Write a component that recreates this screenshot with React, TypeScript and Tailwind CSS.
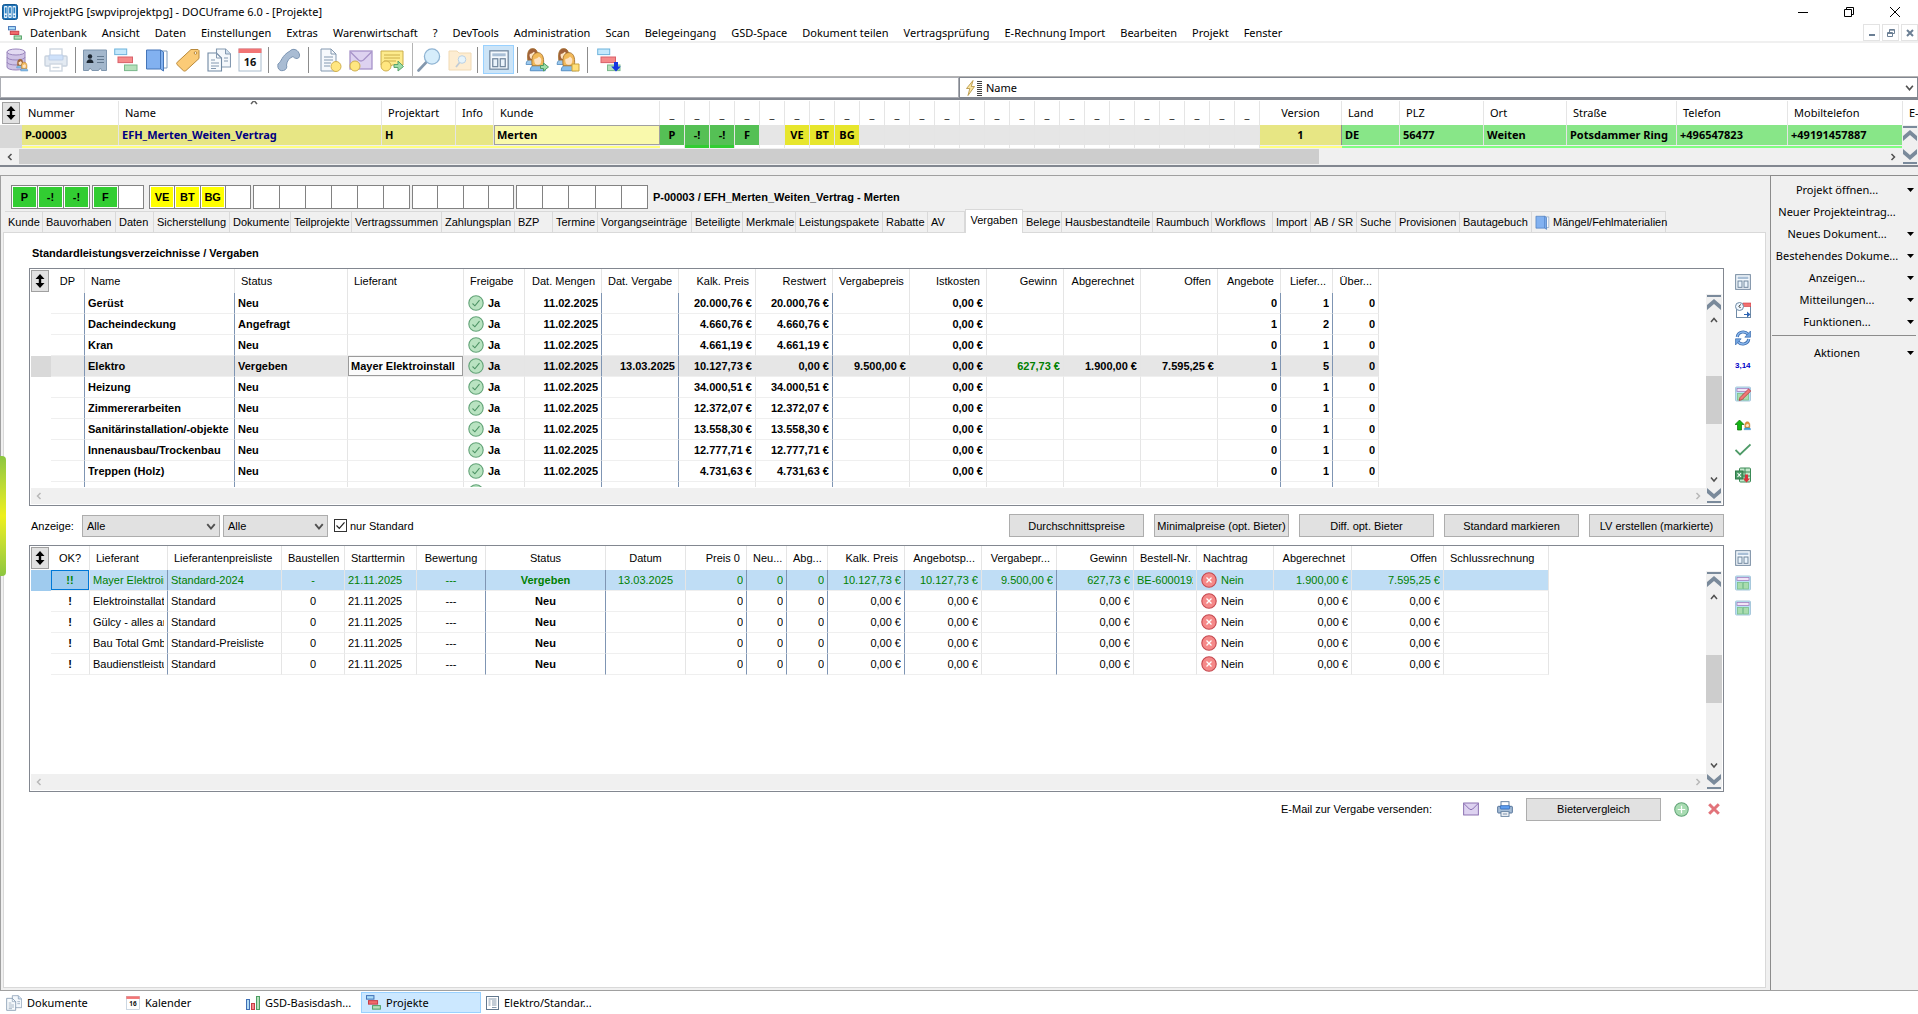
import { useState } from 'react';
import type { ReactNode } from 'react';
import { clsx } from 'clsx';

const ui = 'font-["Noto_Sans","Open_Sans",sans-serif]';
const form = 'font-["Liberation_Sans",Arial,sans-serif]';

interface IconProps {
  className?: string;
}

interface Column {
  title: string;
  width: string;
  align?: 'left' | 'center' | 'right';
  dark?: boolean;
}

const alignClass = {
  left: 'text-left',
  center: 'text-center',
  right: 'text-right',
};

/* ---------- Icons ---------- */

function AppIcon({ className = 'w-4 h-4' }: IconProps) {
  return (
    <svg className={className} viewBox="0 0 16 16">
      <rect x="0.5" y="0.5" width="15" height="15" rx="2" fill="#1e73b8" stroke="#155a94" />
      {[2, 6.3, 10.6].map((x) => (
        <g key={x}>
          <rect x={x} y="2" width="3.4" height="12" rx="0.8" fill="#e8f3fb" />
          <rect x={x + 0.8} y="3.4" width="1.8" height="6" fill="#2d83c4" />
          <circle cx={x + 1.7} cy="11.8" r="0.9" fill="#2d83c4" />
        </g>
      ))}
    </svg>
  );
}

function ProjectIcon({ className = 'w-4 h-4', pale, arrow }: IconProps & { pale?: boolean; arrow?: boolean }) {
  return (
    <svg className={className} viewBox="0 0 24 24">
      <rect x="0.7" y="1" width="12" height="5.6" fill={pale ? '#c4e8fc' : '#a9dcf8'} stroke={pale ? '#6fb3dc' : '#3f6fb5'} strokeWidth={pale ? 1 : 1.6} />
      <rect x="4" y="9" width="14.5" height="5.6" fill={pale ? '#f58a8a' : '#f06a6a'} stroke={pale ? '#d9606a' : '#c83c46'} strokeWidth={pale ? 1 : 1.6} />
      <rect x="10.500" y="17" width="12.500" height="5.600" fill="#b5e0bb" stroke={pale ? '#79b98b' : '#4c9e63'} strokeWidth={pale ? 1 : 1.6} />
      {arrow && <path d="M17 14h4v4.500h2.800L19 23.500l-4.800-5H17z" fill="#1436e0" />}
    </svg>
  );
}

function Person({ x, y, s, hair, body }: { x: number; y: number; s: number; hair: string; body: string }) {
  return (
    <g transform={`translate(${x} ${y}) scale(${s})`}>
      <path d="M1 15c0-4 3-5 6-5s6 1 6 5z" fill={body} stroke="#4a86bd" strokeWidth="0.7" />
      <path d="M2.500 11C1.500 3 4 0.500 7 0.500S12.500 3 11.500 11z" fill={hair} stroke="#a5702c" strokeWidth="0.7" />
      <ellipse cx="7" cy="6.600" rx="2.800" ry="3.600" fill="#fde3c4" />
      <path d="M4 5.500c2 0 3-1 4-2 1 1 1.500 1.500 2.200 2C10 2.500 9 2 7 2S4 3 4 5.500z" fill={hair} />
    </g>
  );
}

function DatabaseIcon({ className = 'w-6 h-6' }: IconProps) {
  return (
    <svg className={className} viewBox="0 0 24 24">
      <path d="M2 4v15c0 4 18 4 18 0V4z" fill="#cfc3e6" stroke="#9a86bd" />
      <ellipse cx="11" cy="4" rx="9" ry="3" fill="#e2daf2" stroke="#9a86bd" />
      <path d="M2 9c0 4 18 4 18 0M2 14c0 4 18 4 18 0" fill="none" stroke="#9a86bd" />
      <Person x={11} y={11} s={0.6} hair="#a0613a" body="#86bdea" />
      <Person x={15} y={14} s={0.6} hair="#f2b95a" body="#86bdea" />
    </svg>
  );
}

function PrinterIcon({ className = 'w-6 h-6', faded }: IconProps & { faded?: boolean }) {
  return (
    <svg className={clsx(className, faded && 'opacity-30')} viewBox="0 0 24 24">
      <rect x="6" y="1" width="12" height="8" fill="#fff" stroke="#5f7c9c" strokeWidth="1.4" />
      <rect x="1" y="8" width="22" height="10" rx="1" fill="#a6bdd6" stroke="#4c6d94" strokeWidth="1.4" />
      <rect x="5" y="7" width="14" height="5" rx="1" fill="#5f9ff0" stroke="#2f66b5" strokeWidth="1.2" />
      <rect x="6" y="16" width="12" height="7" fill="#fff" stroke="#5f7c9c" strokeWidth="1.4" />
      <path d="M8.500 19.500h7" stroke="#5f7c9c" strokeWidth="1.400" />
    </svg>
  );
}

function ContactIcon({ className = 'w-6 h-6' }: IconProps) {
  return (
    <svg className={className} viewBox="0 0 24 24">
      <path d="M0.500 2h23v20.500h-5l-1-2.500-2 2.500H9L7 20l-1.500 2.500h-5z" fill="#a3b7cc" stroke="#7f96ae" />
      <circle cx="7" cy="8.500" r="2.200" fill="#1d2732" />
      <path d="M3.500 15c0-5 7-5 7 0z" fill="#1d2732" />
      <path d="M14 8.500h7M14 11.500h7M14 14.500h7" stroke="#62788e" strokeWidth="1.200" />
    </svg>
  );
}

function BookIcon({ className = 'w-6 h-6' }: IconProps) {
  return (
    <svg className={className} viewBox="0 0 24 24">
      <path d="M12 3h10v17H12z" fill="#fff" stroke="#7e9abb" />
      <path d="M18 5v17" stroke="#7e9abb" />
      <path d="M1.500 2h14l3 2v19l-3-2h-14z" fill="#82b1f0" stroke="#4475b8" />
      <path d="M15.500 2v19" stroke="#4475b8" />
    </svg>
  );
}

function TagIcon({ className = 'w-6 h-6' }: IconProps) {
  return (
    <svg className={className} viewBox="0 0 24 24">
      <path d="M23 2.500v8L10 22.500c-1 0.800-2 0.800-2.800 0L1 16.500c-0.600-0.700-0.500-1.500 0.200-2.200L15 1.500h7z" fill="#fbcb77" stroke="#b98a3c" />
      <circle cx="19.500" cy="5" r="1.300" fill="#fff" stroke="#b98a3c" />
    </svg>
  );
}

function DocsIcon({ className = 'w-6 h-6' }: IconProps) {
  return (
    <svg className={className} viewBox="0 0 24 24">
      <path d="M9.500 1h9l5 5v13h-14z" fill="#f4f8fc" stroke="#8499b0" strokeWidth="1.100" />
      <path d="M18.500 1v5h5" fill="#cfe0f0" stroke="#8499b0" />
      <path d="M1 5h8.500l5 5v13H1z" fill="#f8fbfd" stroke="#7089a3" strokeWidth="1.100" />
      <path d="M9.500 5v5h5M4 12h4M4 15h8M4 18h8M4 20.500h5M17 10h4M17 13h4" fill="none" stroke="#8499b0" />
    </svg>
  );
}

function CalendarIcon({ className = 'w-6 h-6' }: IconProps) {
  return (
    <svg className={className} viewBox="0 0 24 24">
      <rect x="1" y="1" width="22" height="22" fill="#fff" stroke="#a9bccd" />
      <rect x="0.500" y="0.500" width="23" height="4.500" fill="#f27474" />
      <text x="12" y="17.500" textAnchor="middle" fontSize="11" fontWeight="700" fontFamily="Noto Sans" fill="#111">16</text>
    </svg>
  );
}

function PhoneIcon({ className = 'w-6 h-6' }: IconProps) {
  return (
    <svg className={className} viewBox="0 0 24 24">
      <path
        d="M1 16C5 13.500 4 8 13 3c2-2.500 6-2 8 0.500 2 2.500 2 5 0.500 6.500-1.500 1-4 0.500-5.500-1.500C12 10 10 13 9.500 17c1 2.500-0.500 5-3 5.500-2.500 0.700-5-0.500-5.500-3-0.300-1.500-0.200-2.500 0-3.500z"
        fill="#a9bcd3"
        stroke="#7c95b3"
      />
    </svg>
  );
}

function PageDotIcon({ className = 'w-6 h-6' }: IconProps) {
  return (
    <svg className={className} viewBox="0 0 24 24">
      <path d="M3 1h10l5 5v17H3z" fill="#f6f9fc" stroke="#8499b0" />
      <path d="M13 1v5h5M6 9h9M6 12h9M6 15h7M6 18h6" fill="none" stroke="#8499b0" />
      <circle cx="18" cy="18.500" r="5" fill="#ffe680" stroke="#d0b04e" />
    </svg>
  );
}

function MailIcon({ className = 'w-6 h-6', dot }: IconProps & { dot?: boolean }) {
  return (
    <svg className={className} viewBox="0 0 24 24">
      <rect x="1" y="3" width="22" height="18" fill="#ddd2f0" stroke={dot ? '#a793c9' : '#7d5fa8'} strokeWidth="1.300" />
      <path d="M1.500 4l8 8q2.500 2 5 0l8-8" fill="none" stroke={dot ? '#a793c9' : '#7d5fa8'} strokeWidth="1.300" />
      {dot && <circle cx="6" cy="18" r="5" fill="#ffe680" stroke="#d0b04e" />}
    </svg>
  );
}

function NoteIcon({ className = 'w-6 h-6' }: IconProps) {
  return (
    <svg className={className} viewBox="0 0 24 24">
      <path d="M1 3h22v14H12l-5 4v-4H1z" fill="#fdeb8d" stroke="#ccae4a" />
      <path d="M4 7h16M4 10h16M4 13h12" stroke="#ccae4a" />
      <circle cx="6" cy="18" r="5" fill="#ffe680" stroke="#d0b04e" />
      <path d="M14 16.500h4V13l5.500 5.500L18 23v-3.500h-4z" fill="#9edca8" stroke="#5aa36c" />
    </svg>
  );
}

function MagnifierIcon({ className = 'w-6 h-6' }: IconProps) {
  return (
    <svg className={className} viewBox="0 0 24 24">
      <path d="M9.500 14L1.500 22.500" stroke="#8498ae" strokeWidth="2.600" strokeLinecap="round" />
      <circle cx="15" cy="8.500" r="7.600" fill="#d6edfb" stroke="#8fb4d3" strokeWidth="1.300" />
    </svg>
  );
}

function FolderSearchIcon({ className = 'w-6 h-6' }: IconProps) {
  return (
    <svg className={clsx(className, 'opacity-60')} viewBox="0 0 24 24">
      <path d="M1 4V3h8l2 2h12v17H1z" fill="#fde2b5" stroke="#e8c384" />
      <path d="M8 19l4-5" stroke="#9ab" strokeWidth="1.800" />
      <circle cx="14" cy="11.500" r="3.800" fill="#d6edfb" stroke="#8fb4d3" />
    </svg>
  );
}

function LayoutIcon({ className = 'w-4 h-4' }: IconProps) {
  return (
    <svg className={className} viewBox="0 0 24 24">
      <rect x="1" y="1" width="22" height="22" fill="#f3f8fd" stroke="#71879e" strokeWidth="1.500" />
      <rect x="4" y="4" width="16" height="3.500" fill="#a9bfd6" />
      <rect x="4.500" y="10.500" width="6" height="9.500" fill="#eaf3fb" stroke="#71879e" strokeWidth="1.500" />
      <rect x="13.500" y="10.500" width="6" height="9.500" fill="#eaf3fb" stroke="#71879e" strokeWidth="1.500" />
    </svg>
  );
}

function PeopleIcon({ className = 'w-6 h-6', note }: IconProps & { note?: boolean }) {
  return (
    <svg className={className} viewBox="0 0 24 24">
      <Person x={0} y={0} s={1.1} hair="#a0613a" body="#9cc8ec" />
      <Person x={4} y={4} s={1.25} hair="#f2b95a" body="#86bdea" />
      {note ? (
        <path d="M16 16h7v7h-7z" fill="#ffe07a" stroke="#c9a23e" />
      ) : (
        <path d="M15.500 17.500h3V15l5 4-5 4v-2.500h-3z" fill="#9edca8" stroke="#4c9e63" />
      )}
    </svg>
  );
}

function CalendarClockIcon() {
  return (
    <svg className="w-4 h-4" viewBox="0 0 16 16">
      <rect x="1.500" y="2.500" width="14" height="13" fill="#fff" stroke="#6f8aa6" />
      <rect x="8" y="1" width="8" height="3.500" fill="#f27070" stroke="#cc3b43" strokeWidth="0.600" />
      <circle cx="4.500" cy="4.500" r="4" fill="#eef6fd" stroke="#6f8aa6" />
      <path d="M5.500 2.500L4 4.500l1.500 1.500" fill="none" stroke="#222" />
      <path d="M9 12h3v-2.500l3.500 3-3.500 3V13H9z" fill="#2f66b5" />
    </svg>
  );
}

function RefreshIcon() {
  return (
    <svg className="w-4 h-4" viewBox="0 0 16 16">
      <path d="M2.200 7C3 1.500 10 0.500 13 4.200" fill="none" stroke="#3f6fb0" strokeWidth="3" />
      <path d="M2.200 7C3 1.500 10 0.500 13 4.200" fill="none" stroke="#8ab8ee" strokeWidth="1.400" />
      <path d="M15.500 1v6.200H9.800z" fill="#6fa3e0" stroke="#3f6fb0" strokeWidth="0.700" />
      <path d="M13.800 9C13 14.500 6 15.500 3 11.800" fill="none" stroke="#3f6fb0" strokeWidth="3" />
      <path d="M13.800 9C13 14.500 6 15.500 3 11.800" fill="none" stroke="#8ab8ee" strokeWidth="1.400" />
      <path d="M0.500 15V8.800h5.700z" fill="#6fa3e0" stroke="#3f6fb0" strokeWidth="0.700" />
    </svg>
  );
}

function SheetIcon({ pencil }: { pencil?: boolean }) {
  return (
    <svg className="w-4 h-4" viewBox="0 0 16 16">
      <rect x="0.500" y="1" width="15" height="14" rx="1" fill="#b8e2f5" stroke="#a8c8dc" />
      <rect x="2" y="2.500" width="12" height="3" fill="#f3e4f6" stroke="#a57fc0" strokeWidth="0.800" />
      <rect x="2.500" y="7.500" width="5" height="6.500" fill="#a9dcae" stroke="#7cc08a" strokeWidth="0.800" />
      <rect x="8.500" y="7.500" width="5" height="6.500" fill="#a9dcae" stroke="#7cc08a" strokeWidth="0.800" />
      {pencil && <path d="M13.500 3l2.300 2-8.600 8.500-3 1 0.800-3z" fill="#f07878" stroke="#b53a42" strokeWidth="0.800" />}
    </svg>
  );
}

function UpPersonIcon() {
  return (
    <svg className="w-4 h-4" viewBox="0 0 16 16">
      <path d="M4.500 3L9 7.500H6.500V13h-4V7.500H0z" fill="#12b512" stroke="#087008" strokeWidth="0.700" />
      <Person x={8.500} y={4.500} s={0.550} hair="#e0913a" body="#35a0e0" />
    </svg>
  );
}

function ExcelIcon() {
  return (
    <svg className="w-4 h-4" viewBox="0 0 16 16">
      <rect x="4.500" y="1" width="11" height="14" rx="1" fill="#c3e8cb" stroke="#3c8a57" />
      <path d="M5 5h10M5 9h10M10 1v13" stroke="#3c8a57" />
      <rect x="0.500" y="4" width="7.500" height="8" fill="#4b9c67" stroke="#2f7a4b" />
      <path d="M2.500 6l3.500 4M6 6l-3.500 4" stroke="#fff" strokeWidth="1.100" />
      <path d="M10 7.500h3v4h2l-3.500 4L8 11.500h2z" fill="#d8323c" />
    </svg>
  );
}

function CheckCircle() {
  return (
    <svg className="w-4 h-4 shrink-0" viewBox="0 0 16 16">
      <circle cx="8" cy="8" r="7.200" fill="#b9e3c1" stroke="#62a377" strokeWidth="1.100" />
      <path d="M4.500 8.500l2.400 2.300 4.600-5.600" fill="none" stroke="#4f9466" strokeWidth="1.100" />
    </svg>
  );
}

function CrossCircle() {
  return (
    <svg className="w-4 h-4 shrink-0" viewBox="0 0 16 16">
      <circle cx="8" cy="8" r="7.200" fill="#f58989" stroke="#c5474e" strokeWidth="1.100" />
      <path d="M5.500 5.500l5 5M10.500 5.500l-5 5" stroke="#fff" strokeWidth="1.300" />
    </svg>
  );
}

function Chevron({ dir, className = 'w-2 h-2' }: IconProps & { dir: 'up' | 'down' | 'left' | 'right' }) {
  const paths = {
    up: 'M1 6l3-3.500L7 6',
    down: 'M1 2.500L4 6l3-3.500',
    left: 'M5.500 1L2.500 4l3 3',
    right: 'M2.500 1l3 3-3 3',
  };
  return (
    <svg className={className} viewBox="0 0 8 8" fill="none" stroke="currentColor" strokeWidth="1.500">
      <path d={paths[dir]} />
    </svg>
  );
}

function JumpIcon({ dir }: { dir: 'up' | 'down' }) {
  return (
    <svg className={clsx('w-4 h-4', dir === 'down' && 'rotate-180')} viewBox="0 0 16 16" fill="#7a8a9b">
      <rect x="1" y="1" width="14" height="2" />
      <path d="M8 5l7 6v5l-7-6-7 6v-5z" />
    </svg>
  );
}

function Caret() {
  return (
    <svg className="w-[7px] h-[4px]" viewBox="0 0 7 4">
      <path d="M0 0h7L3.500 4z" fill="#000" />
    </svg>
  );
}

function SortHandle() {
  return (
    <button aria-label="Sortierung" className="flex items-center justify-center w-[18px] h-[22px] bg-[#e1e1e1] border border-[#a0a0a0]">
      <svg className="w-[10px] h-[14px]" viewBox="0 0 10 14">
        <path d="M5 0l4.500 5H6.200v4h3.300L5 14 0.500 9h3.300V5H0.500z" fill="#000" />
      </svg>
    </button>
  );
}

/* ---------- Data ---------- */

const menus = [
  'Datenbank', 'Ansicht', 'Daten', 'Einstellungen', 'Extras', 'Warenwirtschaft', '?', 'DevTools', 'Administration', 'Scan',
  'Belegeingang', 'GSD-Space', 'Dokument teilen', 'Vertragsprüfung', 'E-Rechnung Import', 'Bearbeiten', 'Projekt', 'Fenster',
];

const tabs = [
  { label: 'Kunde', width: 'w-[38px]' },
  { label: 'Bauvorhaben', width: 'w-[73px]' },
  { label: 'Daten', width: 'w-[38px]' },
  { label: 'Sicherstellung', width: 'w-[76px]' },
  { label: 'Dokumente', width: 'w-[61px]' },
  { label: 'Teilprojekte', width: 'w-[61px]' },
  { label: 'Vertragssummen', width: 'w-[90px]' },
  { label: 'Zahlungsplan', width: 'w-[73px]' },
  { label: 'BZP', width: 'w-[38px]' },
  { label: 'Termine', width: 'w-[45px]' },
  { label: 'Vorgangseinträge', width: 'w-[94px]' },
  { label: 'Beteiligte', width: 'w-[51px]' },
  { label: 'Merkmale', width: 'w-[53px]' },
  { label: 'Leistungspakete', width: 'w-[87px]' },
  { label: 'Rabatte', width: 'w-[45px]' },
  { label: 'AV', width: 'w-[37px]' },
  { label: 'Vergaben', width: 'w-[58px]' },
  { label: 'Belege', width: 'w-[39px]' },
  { label: 'Hausbestandteile', width: 'w-[91px]' },
  { label: 'Raumbuch', width: 'w-[59px]' },
  { label: 'Workflows', width: 'w-[61px]' },
  { label: 'Import', width: 'w-[38px]' },
  { label: 'AB / SR', width: 'w-[46px]' },
  { label: 'Suche', width: 'w-[39px]' },
  { label: 'Provisionen', width: 'w-[64px]' },
  { label: 'Bautagebuch', width: 'w-[72px]' },
  { label: 'Mängel/Fehlmaterialien', width: 'w-[134px]' },
];

const leadColumns = [
  { title: 'Nummer', width: 'w-[97px]' },
  { title: 'Name', width: 'w-[263px]' },
  { title: 'Projektart', width: 'w-[74px]' },
  { title: 'Info', width: 'w-[38px]' },
  { title: 'Kunde', width: 'w-[166px]' },
];

const addressColumns = [
  { title: 'Land', value: 'DE', width: 'w-[58px]' },
  { title: 'PLZ', value: '56477', width: 'w-[84px]' },
  { title: 'Ort', value: 'Weiten', width: 'w-[83px]' },
  { title: 'Straße', value: 'Potsdammer Ring', width: 'w-[110px]' },
  { title: 'Telefon', value: '+496547823', width: 'w-[111px]' },
  { title: 'Mobiltelefon', value: '+49191457887', width: 'w-[115px]' },
];

const flags = ['P', '-!', '-!', 'F', '', 'VE', 'BT', 'BG', ...Array<string>(16).fill('')];

const chipGroups = [
  { width: 'w-[79px]', cells: ['P', '-!', '-!'] },
  { width: 'w-[52px]', cells: ['F', ''] },
  { width: 'w-[102px]', cells: ['VE', 'BT', 'BG', ''] },
  { width: 'w-[157px]', cells: ['', '', '', '', '', ''] },
  { width: 'w-[102px]', cells: ['', '', '', ''] },
  { width: 'w-[132px]', cells: ['', '', '', '', ''] },
];

const awardColumns: Column[] = [
  { title: 'DP', width: 'w-[34px]', align: 'center', dark: true },
  { title: 'Name', width: 'w-[150px]', dark: true },
  { title: 'Status', width: 'w-[113px]' },
  { title: 'Lieferant', width: 'w-[116px]' },
  { title: 'Freigabe', width: 'w-[61px]' },
  { title: 'Dat. Mengen', width: 'w-[77px]', align: 'right', dark: true },
  { title: 'Dat. Vergabe', width: 'w-[77px]', align: 'right', dark: true },
  { title: 'Kalk. Preis', width: 'w-[77px]', align: 'right' },
  { title: 'Restwert', width: 'w-[77px]', align: 'right', dark: true },
  { title: 'Vergabepreis', width: 'w-[77px]', align: 'right' },
  { title: 'Istkosten', width: 'w-[77px]', align: 'right' },
  { title: 'Gewinn', width: 'w-[77px]', align: 'right' },
  { title: 'Abgerechnet', width: 'w-[77px]', align: 'right' },
  { title: 'Offen', width: 'w-[77px]', align: 'right' },
  { title: 'Angebote', width: 'w-[63px]', align: 'right', dark: true },
  { title: 'Liefer...', width: 'w-[52px]', align: 'right', dark: true },
  { title: 'Über...', width: 'w-[46px]', align: 'right' },
];

const awards = [
  { name: 'Gerüst', status: 'Neu', price: '20.000,76 €', offers: 0, suppliers: 1 },
  { name: 'Dacheindeckung', status: 'Angefragt', price: '4.660,76 €', offers: 1, suppliers: 2 },
  { name: 'Kran', status: 'Neu', price: '4.661,19 €', offers: 0, suppliers: 1 },
  { name: 'Elektro', status: 'Vergeben', price: '10.127,73 €', offers: 1, suppliers: 5, awarded: true },
  { name: 'Heizung', status: 'Neu', price: '34.000,51 €', offers: 0, suppliers: 1 },
  { name: 'Zimmererarbeiten', status: 'Neu', price: '12.372,07 €', offers: 0, suppliers: 1 },
  { name: 'Sanitärinstallation/-objekte', status: 'Neu', price: '13.558,30 €', offers: 0, suppliers: 1 },
  { name: 'Innenausbau/Trockenbau', status: 'Neu', price: '12.777,71 €', offers: 0, suppliers: 1 },
  { name: 'Treppen (Holz)', status: 'Neu', price: '4.731,63 €', offers: 0, suppliers: 1 },
];

const bidderColumns: Column[] = [
  { title: 'OK?', width: 'w-[39px]', align: 'center' },
  { title: 'Lieferant', width: 'w-[78px]', dark: true },
  { title: 'Lieferantenpreisliste', width: 'w-[114px]' },
  { title: 'Baustellen', width: 'w-[63px]', align: 'center' },
  { title: 'Starttermin', width: 'w-[72px]' },
  { title: 'Bewertung', width: 'w-[69px]', align: 'center', dark: true },
  { title: 'Status', width: 'w-[120px]', align: 'center', dark: true },
  { title: 'Datum', width: 'w-[80px]', align: 'center' },
  { title: 'Preis 0', width: 'w-[61px]', align: 'right', dark: true },
  { title: 'Neu...', width: 'w-[40px]', align: 'right', dark: true },
  { title: 'Abg...', width: 'w-[41px]', align: 'right', dark: true },
  { title: 'Kalk. Preis', width: 'w-[77px]', align: 'right', dark: true },
  { title: 'Angebotsp...', width: 'w-[77px]', align: 'right' },
  { title: 'Vergabepr...', width: 'w-[75px]', align: 'right', dark: true },
  { title: 'Gewinn', width: 'w-[77px]', align: 'right' },
  { title: 'Bestell-Nr.', width: 'w-[63px]' },
  { title: 'Nachtrag', width: 'w-[77px]' },
  { title: 'Abgerechnet', width: 'w-[78px]', align: 'right' },
  { title: 'Offen', width: 'w-[92px]', align: 'right' },
  { title: 'Schlussrechnung', width: 'w-[105px]' },
];

const bidders = [
  { name: 'Mayer Elektroin', list: 'Standard-2024', awarded: true },
  { name: 'Elektroinstallati', list: 'Standard' },
  { name: 'Gülcy - alles an', list: 'Standard' },
  { name: 'Bau Total Gmb', list: 'Standard-Preisliste' },
  { name: 'Baudienstleistu', list: 'Standard' },
];

const sideActions = [
  { label: 'Projekt öffnen...', menu: true },
  { label: 'Neuer Projekteintrag...', menu: false },
  { label: 'Neues Dokument...', menu: true },
  { label: 'Bestehendes Dokume...', menu: true },
  { label: 'Anzeigen...', menu: true },
  { label: 'Mitteilungen...', menu: true },
  { label: 'Funktionen...', menu: true },
];

/* ---------- Building blocks ---------- */

function Separator() {
  return <div className="w-px h-[26px] mx-[6px] bg-[#8c8c8c]" />;
}

function ToolButton({ label, children }: { label: string; children: ReactNode }) {
  return (
    <button aria-label={label} className="flex items-center justify-center w-[31px] h-[30px]">
      {children}
    </button>
  );
}

interface GridProps {
  columns: Column[];
  children: ReactNode;
  height: string;
  thumb: string;
}

function Grid({ columns, children, height, thumb }: GridProps) {
  return (
    <div className={clsx('flex-1 min-w-0 flex bg-white border border-[#828790] px-px pb-px', height)}>
      <div className="flex-1 min-w-0 flex flex-col">
        <div className="flex-1 min-h-0 overflow-hidden mb-px">
          <table className="table-fixed w-px border-separate border-spacing-0">
            <thead>
              <tr className="h-6">
                <th className="w-[20px] p-0"><SortHandle /></th>
                {columns.map((col) => (
                  <th
                    key={col.title}
                    className={clsx(
                      'p-0 px-[6px] font-normal border-r border-[#e5e5e5] whitespace-nowrap overflow-hidden',
                      col.width,
                      alignClass[col.align ?? 'left'],
                    )}
                  >
                    {col.title}
                  </th>
                ))}
              </tr>
            </thead>
            <tbody>{children}</tbody>
          </table>
        </div>
        <div className="flex items-center justify-between h-4 px-1 bg-[#f0f0f0] text-[#b8b8b8]">
          <Chevron dir="left" />
          <Chevron dir="right" />
        </div>
      </div>
      <div className="w-4 mt-[25px] flex flex-col items-center bg-[#f0f0f0] text-[#505050]">
        <JumpIcon dir="up" />
        <div className="flex items-center h-[19px]"><Chevron dir="up" /></div>
        <div className={clsx('w-full flex-1 flex flex-col', thumb)}>
          <div className="w-full h-12 bg-[#cdcdcd]" />
        </div>
        <div className="flex items-center h-[19px]"><Chevron dir="down" /></div>
        <JumpIcon dir="down" />
      </div>
    </div>
  );
}

interface RowProps {
  columns: Column[];
  cells: ReactNode[];
  className?: string;
  leadClass?: string;
  focus?: number;
  focusClass?: string;
}

function Row({ columns, cells, className, leadClass, focus, focusClass }: RowProps) {
  return (
    <tr className={clsx('h-[21px]', className)}>
      <td className={clsx('p-0', leadClass)} />
      {columns.map((col, i) => (
        <td
          key={col.title}
          className={clsx(
            'p-0 h-[21px] border-b border-b-[#efefef] border-r',
            col.dark ? 'border-r-[#7f95b3]' : 'border-r-[#e5e5e5]',
            alignClass[col.align ?? 'left'],
          )}
        >
          <div className={clsx('h-5 leading-5 overflow-hidden whitespace-nowrap', focus === i ? focusClass : 'px-[3px]')}>
            <div className="overflow-hidden">{cells[i]}</div>
          </div>
        </td>
      ))}
    </tr>
  );
}

function FormButton({ children }: { children: ReactNode }) {
  return (
    <button className="w-[135px] h-[23px] bg-[#e1e1e1] border border-[#adadad] text-center">{children}</button>
  );
}

function FormSelect({ label, width }: { label: string; width: string }) {
  return (
    <div className={clsx('relative', width)}>
      <select aria-label={label} className="appearance-none w-full h-[22px] pl-1 bg-[#e1e1e1] border border-[#adadad] outline-none">
        <option>Alle</option>
      </select>
      <Chevron dir="down" className="absolute right-1 top-[6px] w-[10px] h-[10px] text-[#505050] pointer-events-none" />
    </div>
  );
}

/* ---------- Sections ---------- */

function TitleBar() {
  return (
    <header className="flex items-center justify-between h-6 pl-[2px] pr-[18px]">
      <div className="flex items-center gap-[5px]">
        <AppIcon />
        <h1>ViProjektPG [swpviprojektpg] - DOCUframe 6.0 - [Projekte]</h1>
      </div>
      <div className="flex items-center gap-9">
        <button aria-label="Minimieren" className="w-[10px] h-px bg-black" />
        <button aria-label="Wiederherstellen" className="w-[10px] h-[10px]">
          <svg viewBox="0 0 10 10" fill="none" stroke="#000">
            <path d="M0.500 2.500h7v7h-7zM2.500 2.500v-2h7v7h-2" />
          </svg>
        </button>
        <button aria-label="Schließen" className="w-[10px] h-[10px]">
          <svg viewBox="0 0 10 10" stroke="#000">
            <path d="M0 0l10 10M10 0L0 10" />
          </svg>
        </button>
      </div>
    </header>
  );
}

function MenuBar() {
  return (
    <nav className="flex items-center h-[19px] pl-2 border-b-2 border-[#f0f0f0]">
      <ProjectIcon className="w-[14px] h-[14px]" />
      <ul className="flex flex-1 gap-px pl-px">
        {menus.map((m) => (
          <li key={m}>
            <button className="px-[7px] whitespace-nowrap">{m}</button>
          </li>
        ))}
      </ul>
      <div className="flex gap-[2px] text-[#6b7f94]">
        <button aria-label="Fenster minimieren" className="flex items-end justify-center w-[17px] h-[17px] pb-1 border border-[#e3e3e3] bg-white">
          <span className="w-[6px] h-[2px] bg-[#6b7f94]" />
        </button>
        <button aria-label="Fenster wiederherstellen" className="flex items-center justify-center w-[17px] h-[17px] border border-[#e3e3e3] bg-white">
          <svg className="w-2 h-2" viewBox="0 0 8 8" fill="none" stroke="currentColor">
            <path d="M0.500 3.500h5v4h-5zM2.500 3.500v-3h5v4h-2M0.500 4.500h5M2.500 1.200h5" />
          </svg>
        </button>
        <button aria-label="Fenster schließen" className="flex items-center justify-center w-[17px] h-[17px] border border-[#e3e3e3] bg-white">
          <svg className="w-2 h-2" viewBox="0 0 8 8" stroke="currentColor" strokeWidth="2">
            <path d="M1 1l6 6M7 1L1 7" />
          </svg>
        </button>
      </div>
    </nav>
  );
}

function Toolbar() {
  return (
    <div className="flex items-center h-[34px] pl-1 border-b border-[#b4b4b4]">
      <button aria-label="Datenbank öffnen" className="flex items-center justify-center w-[26px] h-[30px]"><DatabaseIcon /></button>
      <Separator />
      <button aria-label="Drucken" className="flex items-center justify-center w-[26px] h-[30px]"><PrinterIcon className="w-6 h-6" faded /></button>
      <Separator />
      <div className="flex -mx-[3px]">
        <ToolButton label="Kontakte"><ContactIcon /></ToolButton>
        <ToolButton label="Projekte"><ProjectIcon className="w-6 h-6" pale /></ToolButton>
        <ToolButton label="Bücher"><BookIcon /></ToolButton>
        <ToolButton label="Artikel"><TagIcon /></ToolButton>
        <ToolButton label="Dokumente"><DocsIcon /></ToolButton>
        <ToolButton label="Kalender"><CalendarIcon /></ToolButton>
      </div>
      <Separator />
      <button aria-label="Telefon" className="flex items-center justify-center w-[27px] h-[30px]"><PhoneIcon /></button>
      <Separator />
      <div className="flex -ml-px">
        <ToolButton label="Neues Dokument"><PageDotIcon /></ToolButton>
        <ToolButton label="Neue E-Mail"><MailIcon dot /></ToolButton>
        <ToolButton label="Neue Notiz"><NoteIcon /></ToolButton>
      </div>
      <div className="w-px h-[33px] ml-[5px] bg-[#b4b4b4]" />
      <ToolButton label="Suchen"><MagnifierIcon /></ToolButton>
      <ToolButton label="Ordner durchsuchen"><FolderSearchIcon /></ToolButton>
      <div className="w-px h-[26px] ml-[2px] mr-[5px] bg-[#8c8c8c]" />
      <button aria-label="Maskenansicht" className="flex items-center justify-center w-[31px] h-[29px] bg-[#cce4f7] border border-[#99d1ff]">
        <LayoutIcon className="w-[22px] h-[20px]" />
      </button>
      <div className="w-px h-[26px] mx-[3px] bg-[#8c8c8c]" />
      <ToolButton label="Adresse weitergeben"><PeopleIcon /></ToolButton>
      <ToolButton label="Adressnotiz"><PeopleIcon note /></ToolButton>
      <div className="w-px h-[26px] ml-1 mr-[5px] bg-[#8c8c8c]" />
      <ToolButton label="Projekt importieren"><ProjectIcon className="w-6 h-6" pale arrow /></ToolButton>
    </div>
  );
}

function SearchRow() {
  return (
    <div className="flex h-[21px]">
      <input aria-label="Suche" className="flex-1 h-full border border-[#abadb3] outline-none px-1" />
      <div className="flex-1 flex items-center h-full pl-[5px] pr-[3px] border border-[#828790]">
        <svg className="w-[18px] h-4" viewBox="0 0 18 16">
          <path d="M8 0.500L1.500 8.500h3.300L3 15.500l6.500-9H6.300z" fill="#fbe6a2" stroke="#b9984a" strokeWidth="0.900" />
          <path d="M12 1.500h5M12 3.500h5M12 5.500h5M12 7.500h5M12 9.500h5M12 11.500h5M12 13.500h5M12 15.500h5" stroke="#444" />
        </svg>
        <select aria-label="Suchfeld" className="appearance-none flex-1 pl-[3px] outline-none bg-transparent">
          <option>Name</option>
        </select>
        <Chevron dir="down" className="w-[9px] h-[9px] text-[#505050]" />
      </div>
    </div>
  );
}

function ProjectList() {
  const headCell = 'p-0 pl-[6px] font-normal text-left border-r border-[#e5e5e5] whitespace-nowrap';
  const cell = 'p-0 pl-[3px] border-r border-[#e5e5e5] whitespace-nowrap';
  return (
    <section className="relative border-y-2 border-[#828790] pt-px">
      <div className="overflow-hidden">
        <table className="table-fixed w-px border-separate border-spacing-0">
          <thead>
            <tr className="h-6">
              <th className="w-[22px] p-0 pl-[2px]"><SortHandle /></th>
              {leadColumns.map((c) => (
                <th key={c.title} className={clsx(headCell, c.width, 'relative')}>
                  {c.title}
                  {c.title === 'Name' && <Chevron dir="up" className="absolute left-1/2 -top-[3px] w-2 h-2 text-[#606060]" />}
                </th>
              ))}
              {flags.map((_, i) => (
                <th key={i} className="w-[25px] p-0 pt-[2px] font-normal border-r border-[#e5e5e5]">_</th>
              ))}
              <th className="w-[82px] p-0 font-normal border-r border-[#e5e5e5]">Version</th>
              {addressColumns.map((c) => (
                <th key={c.title} className={clsx(headCell, c.width)}>{c.title}</th>
              ))}
              <th className="w-[40px] p-0 pl-[6px] font-normal text-left whitespace-nowrap">E-</th>
            </tr>
          </thead>
          <tbody className="font-bold">
            <tr className="h-5 bg-[#e7e684]">
              <td className="p-0 bg-[#d8d8d8]" />
              <td className={clsx(cell, 'border-[#8f8f70]')}>P-00003</td>
              <td className={clsx(cell, 'border-[#8f8f70] text-[#000080]')}>EFH_Merten_Weiten_Vertrag</td>
              <td className={cell}>H</td>
              <td className={cell} />
              <td className="p-0 h-5 pl-[2px] bg-[#f9f9ac] border border-[#a0a0a0] whitespace-nowrap">Merten</td>
              {flags.map((f, i) => (
                <td
                  key={i}
                  className={clsx(
                    'p-0 text-center border-r border-[#e5e5e5]',
                    f && i < 4 && 'bg-[#55c055]',
                    f && i > 4 && 'bg-[#e7e62d]',
                    !f && 'bg-[#e6e6e6] border-[#dcdcdc]',
                  )}
                >
                  {f}
                </td>
              ))}
              <td className="p-0 text-center border-r border-[#8f8f8f]">1</td>
              {addressColumns.map((c) => (
                <td key={c.title} className={clsx(cell, 'bg-[#88e688]')}>{c.value}</td>
              ))}
              <td className="p-0 bg-[#f0f0f0]" />
            </tr>
            <tr className="h-[3px]">
              <td className="p-0 bg-[#d8d8d8]" />
              <td colSpan={5} className="p-0 bg-[#ffff80] border-t border-[#f0f0f0]" />
              {flags.map((_, i) => (
                <td key={i} className={clsx('p-0 border-r border-[#e5e5e5]', (i === 1 || i === 2) && 'bg-[#32cd32]')} />
              ))}
              <td className="p-0 bg-[#ffff80] border-t border-[#f0f0f0]" />
              <td colSpan={6} className="p-0 bg-[#80ff80] border-t border-[#f0f0f0]" />
              <td className="p-0 bg-[#f0f0f0]" />
            </tr>
          </tbody>
        </table>
      </div>
      <div className="flex items-center h-[17px] pr-4 bg-[#f0f0f0] text-[#505050]">
        <div className="flex justify-center w-[19px]"><Chevron dir="left" /></div>
        <div className="flex-9 h-[15px] bg-[#cdcdcd]" />
        <div className="flex-4 flex justify-end pr-[5px]"><Chevron dir="right" /></div>
      </div>
      <div className="absolute right-0 top-[25px] bottom-0 flex flex-col justify-between w-4 bg-[#f0f0f0]">
        <JumpIcon dir="up" />
        <JumpIcon dir="down" />
      </div>
    </section>
  );
}

function ChipBar() {
  return (
    <div className="flex items-center h-[24px] pl-2 font-bold">
      {chipGroups.map((g, i) => (
        <div key={i} className={clsx('flex h-6 bg-white border border-[#828282] divide-x divide-[#828282]', g.width, i === 1 ? 'mr-[5px]' : 'mr-[2px]')}>
          {g.cells.map((c, j) => (
            <div key={j} className="flex-1 p-px">
              <div
                className={clsx(
                  'h-5 leading-5 text-center',
                  c && i < 2 && 'bg-[#32cd32]',
                  c && i === 2 && 'bg-[#ffff00]',
                )}
              >
                {c}
              </div>
            </div>
          ))}
        </div>
      ))}
      <span className="ml-[3px]">P-00003 / EFH_Merten_Weiten_Vertrag - Merten</span>
    </div>
  );
}

function TabBar() {
  const [active, setActive] = useState('Vergaben');
  return (
    <div role="tablist" className="flex items-end h-[23px] pl-[2px]">
      {tabs.map((t) => (
        <button
          key={t.label}
          role="tab"
          aria-selected={t.label === active}
          onClick={() => setActive(t.label)}
          className={clsx(
            'flex items-center shrink-0 whitespace-nowrap border-[#d9d9d9]',
            t.width,
            t.label === active
              ? 'relative h-6 -mb-px pb-[3px] justify-center bg-white border border-b-0'
              : 'h-[21px] pl-[3px] bg-[#f0f0f0] border-t border-r',
          )}
        >
          {t.label.startsWith('Mängel') && <BookIcon className="w-[15px] h-[15px] shrink-0 mr-[3px]" />}
          {t.label}
        </button>
      ))}
    </div>
  );
}

function AwardTable() {
  return (
    <Grid columns={awardColumns} height="h-[238px]" thumb="pt-[47px]">
      {awards.map((a) => {
        const paid = a.awarded;
        return (
          <Row
            key={a.name}
            columns={awardColumns}
            className={clsx('font-bold', paid && 'bg-[#e6e6e6]')}
            leadClass={paid ? 'bg-[#d9d9d9]' : undefined}
            focus={paid ? 3 : undefined}
            focusClass="px-[2px] !leading-[18px] bg-[#fbfbfb] border border-[#9a9a9a]"
            cells={[
              '',
              a.name,
              a.status,
              paid ? 'Mayer Elektroinstall' : '',
              <span key="ok" className="flex items-center gap-1 h-5 pl-px"><CheckCircle />Ja</span>,
              '11.02.2025',
              paid ? '13.03.2025' : '',
              a.price,
              paid ? '0,00 €' : a.price,
              paid ? '9.500,00 €' : '',
              '0,00 €',
              paid ? <span key="win" className="text-[#008000]">627,73 €</span> : '',
              paid ? '1.900,00 €' : '',
              paid ? '7.595,25 €' : '',
              a.offers,
              a.suppliers,
              0,
            ]}
          />
        );
      })}
      <Row
        columns={awardColumns}
        cells={['', '', '', '', <span key="ok" className="flex items-center h-5 pl-px"><CheckCircle /></span>]}
      />
    </Grid>
  );
}

function BidderTable() {
  return (
    <Grid columns={bidderColumns} height="h-[247px]" thumb="pt-[49px]">
      {bidders.map((b) => {
        const zero = '0,00 €';
        return (
          <Row
            key={b.name}
            columns={bidderColumns}
            className={b.awarded ? 'bg-[#bfddf5] text-[#008000]' : undefined}
            leadClass={b.awarded ? 'bg-[#9fcbee]' : undefined}
            focus={b.awarded ? 0 : undefined}
            focusClass="!leading-[18px] bg-[#9fcbee] border border-[#0078d7]"
            cells={[
              <b key="ok">{b.awarded ? '!!' : '!'}</b>,
              b.name,
              b.list,
              b.awarded ? '-' : 0,
              '21.11.2025',
              '---',
              <b key="status">{b.awarded ? 'Vergeben' : 'Neu'}</b>,
              b.awarded ? '13.03.2025' : '',
              0,
              0,
              0,
              b.awarded ? '10.127,73 €' : zero,
              b.awarded ? '10.127,73 €' : zero,
              b.awarded ? '9.500,00 €' : '',
              b.awarded ? '627,73 €' : zero,
              b.awarded ? 'BE-6000192' : '',
              <span key="extra" className="flex items-center gap-1 h-5 pl-px"><CrossCircle />Nein</span>,
              b.awarded ? '1.900,00 €' : zero,
              b.awarded ? '7.595,25 €' : zero,
              '',
            ]}
          />
        );
      })}
    </Grid>
  );
}

function SideBar() {
  return (
    <aside className={clsx('w-[148px] shrink-0 pt-[3px] pl-px bg-[#f0f0f0] border-l border-t border-[#8c8c8c]', ui)}>
      {sideActions.map((a) => (
        <button key={a.label} className="flex items-center w-full h-[22px]">
          <span className="flex-1 text-center whitespace-nowrap">{a.label}</span>
          <span className="flex justify-center w-4">{a.menu && <Caret />}</span>
        </button>
      ))}
      <hr className="mt-[2px] mr-[2px] border-[#8c8c8c]" />
      <button className="flex items-center w-full h-[34px]">
        <span className="flex-1 text-center">Aktionen</span>
        <span className="flex justify-center w-4"><Caret /></span>
      </button>
    </aside>
  );
}

function TaskBar() {
  const item = 'flex items-center w-[120px] h-[21px] pl-1 gap-[5px] border border-transparent whitespace-nowrap';
  return (
    <footer className="flex items-center h-6 pl-px border-t border-[#a0a0a0] bg-white">
      <button className={item}><DocsIcon className="w-4 h-4" />Dokumente</button>
      <button className={item}><CalendarIcon className="w-[14px] h-[14px]" />Kalender</button>
      <button className={item}>
        <svg className="w-[14px] h-[14px]" viewBox="0 0 14 14">
          <rect x="0.500" y="3.500" width="3" height="10" fill="#b3dcf5" stroke="#3f6fb5" />
          <rect x="5.500" y="7.500" width="3" height="6" fill="#f38a8a" stroke="#c83c46" />
          <rect x="10.500" y="0.500" width="3" height="13" fill="#b5e0bb" stroke="#4c9e63" />
        </svg>
        GSD-Basisdash...
      </button>
      <button className="flex items-center w-[120px] h-[21px] pl-1 gap-[5px] bg-[#cce8ff] border border-[#99d1ff]">
        <ProjectIcon className="w-[15px] h-[15px]" />Projekte
      </button>
      <button className={item}>
        <svg className="w-[13px] h-[14px]" viewBox="0 0 13 14">
          <rect x="0.500" y="0.500" width="12" height="13" fill="#fff" stroke="#62788e" />
          <path d="M2.500 3h8M2.500 5h2M6 5h4.500M2.500 7h2M6 7h4.500M2.500 9h2M6 9h4.500M6 11.500h4.500" stroke="#8699ac" />
        </svg>
        Elektro/Standar...
      </button>
    </footer>
  );
}

export default function App() {
  const [standardOnly, setStandardOnly] = useState(true);

  return (
    <div className={clsx('relative flex flex-col min-h-screen bg-white text-black text-[11px] leading-4 overflow-hidden', ui)}>
      <TitleBar />
      <MenuBar />
      <Toolbar />
      <SearchRow />
      <ProjectList />

      {/* Work area */}
      <div className="flex-1 flex bg-[#f0f0f0] pt-2">
        <main className={clsx('flex-1 min-w-0 flex flex-col pt-[9px] pl-[2px] pr-1 pb-[2px] border-t border-l border-[#a0a0a0]', form)}>
          <ChipBar />
          <TabBar />
          <div className="flex-1 pl-[25px] pr-[14px] bg-white border border-[#d9d9d9]">
            <h2 className="pt-3 pb-[7px] pl-[3px] font-bold">Standardleistungsverzeichnisse / Vergaben</h2>

            <div className="flex gap-[11px]">
              <AwardTable />
              <div className="flex flex-col w-4">
                <button aria-label="Maske" className="flex items-center h-7"><LayoutIcon /></button>
                <button aria-label="Termin" className="flex items-center h-7"><CalendarClockIcon /></button>
                <button aria-label="Aktualisieren" className="flex items-center h-7"><RefreshIcon /></button>
                <button className="flex items-center h-7 text-[8px] font-bold text-[#0000c8]">3,14</button>
                <button aria-label="Liste bearbeiten" className="flex items-center h-7 mb-1"><SheetIcon pencil /></button>
                <button aria-label="Übernehmen" className="flex items-center h-[25px]"><UpPersonIcon /></button>
                <button aria-label="Bestätigen" className="flex items-center h-[25px]">
                  <svg className="w-4 h-4" viewBox="0 0 16 16" fill="none" stroke="#4f9b68" strokeWidth="1.800">
                    <path d="M0.500 8l4.500 4.500L15.500 2.500" />
                  </svg>
                </button>
                <button aria-label="Excel-Export" className="flex items-center h-[25px]"><ExcelIcon /></button>
              </div>
            </div>

            <div className="flex items-center h-[39px] pl-[2px] pr-[27px]">
              <span className="w-[51px]">Anzeige:</span>
              <FormSelect label="Anzeige" width="w-[138px] mr-[3px]" />
              <FormSelect label="Filter" width="w-[105px] mr-[6px]" />
              <label className="flex items-center gap-[3px]">
                <span className="relative w-[13px] h-[13px]">
                  <input
                    type="checkbox"
                    checked={standardOnly}
                    onChange={(e) => setStandardOnly(e.target.checked)}
                    className="block appearance-none w-[13px] h-[13px] bg-white border border-[#333]"
                  />
                  {standardOnly && (
                    <svg className="absolute inset-0 pointer-events-none" viewBox="0 0 13 13" fill="none" stroke="#222" strokeWidth="1.200">
                      <path d="M2.500 6.500l2.800 2.800 5.200-6" />
                    </svg>
                  )}
                </span>
                nur Standard
              </label>
              <div className="flex-1 flex justify-end gap-[10px]">
                <FormButton>Durchschnittspreise</FormButton>
                <FormButton>Minimalpreise (opt. Bieter)</FormButton>
                <FormButton>Diff. opt. Bieter</FormButton>
                <FormButton>Standard markieren</FormButton>
                <FormButton>LV erstellen (markierte)</FormButton>
              </div>
            </div>

            <div className="flex gap-[11px]">
              <BidderTable />
              <div className="flex flex-col w-4">
                <button aria-label="Maske" className="flex items-center h-[25px]"><LayoutIcon /></button>
                <button aria-label="Liste anzeigen" className="flex items-center h-[25px]"><SheetIcon /></button>
                <button aria-label="Liste vergleichen" className="flex items-center h-[25px]"><SheetIcon /></button>
              </div>
            </div>

            <div className="flex items-center justify-end h-[34px] pr-[31px]">
              <span>E-Mail zur Vergabe versenden:</span>
              <button aria-label="E-Mail" className="ml-[31px]"><MailIcon className="w-4 h-4" /></button>
              <button aria-label="Drucken" className="ml-[18px] mr-[13px]"><PrinterIcon className="w-4 h-4" /></button>
              <FormButton>Bietervergleich</FormButton>
              <button aria-label="Hinzufügen" className="ml-[13px]">
                <svg className="w-[15px] h-[15px]" viewBox="0 0 16 16">
                  <circle cx="8" cy="8" r="7.200" fill="#a8dcb2" stroke="#62a377" strokeWidth="1.100" />
                  <path d="M8 4v8M4 8h8" stroke="#fff" strokeWidth="1.300" />
                </svg>
              </button>
              <button aria-label="Löschen" className="ml-[19px]">
                <svg className="w-3 h-3" viewBox="0 0 12 12" stroke="#e2737a" strokeWidth="3">
                  <path d="M1.200 1.200l9.600 9.600M10.800 1.200l-9.600 9.600" />
                </svg>
              </button>
            </div>
          </div>
        </main>
        <SideBar />
      </div>

      <TaskBar />

      {/* Slide-out handle at the window edge */}
      <div className="absolute left-0 top-[456px] w-[6px] h-[120px] rounded-r-[4px] bg-linear-to-b from-[#8cc63f] via-[#eef01a] to-[#8cc63f]" />
    </div>
  );
}
